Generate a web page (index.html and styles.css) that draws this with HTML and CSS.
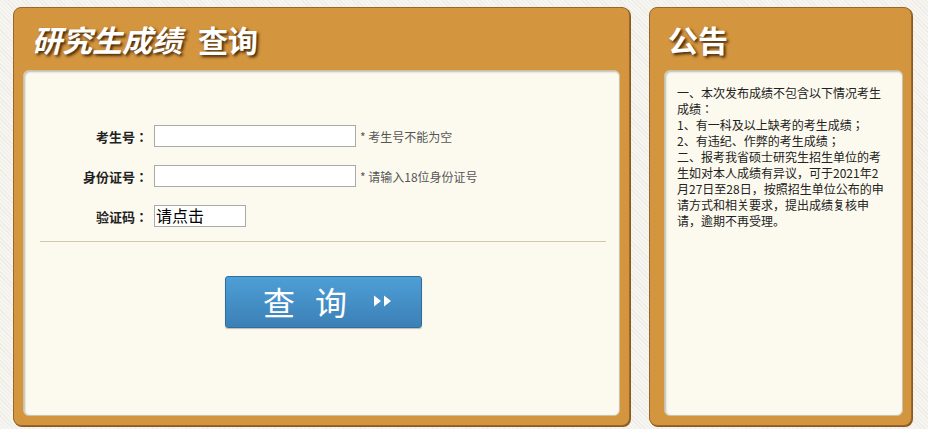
FILE: index.html
```html
<!DOCTYPE html>
<html lang="zh-CN">
<head>
<meta charset="utf-8">
<title>研究生成绩查询</title>
<link rel="stylesheet" href="styles.css">
</head>
<body>
<div class="page">
  <section class="panel panel-main">
    <h1 class="panel-title"><span class="slant">研究生成绩</span><span class="title-gap">查询</span></h1>
    <div class="panel-body form-body">
      <div class="form-grid">
        <label class="f-label" lang="ja">考生号：</label>
        <div class="f-field"><input class="f-input" type="text"><span class="f-hint">* 考生号不能为空</span></div>
        <label class="f-label" lang="ja">身份证号：</label>
        <div class="f-field"><input class="f-input" type="text"><span class="f-hint">* 请输入18位身份证号</span></div>
        <label class="f-label" lang="ja">验证码：</label>
        <div class="f-field"><span class="captcha">请点击</span></div>
      </div>
      <hr class="divider">
      <div class="btn-row">
        <button class="btn-query" type="button"><span class="btn-char">查</span><span class="btn-char btn-char2">询</span><span class="btn-arrows"><svg width="22" height="14" viewBox="0 0 22 14"><path d="M2 1.5 L9 7 L2 12.5 Z M12 1.5 L19 7 L12 12.5 Z" fill="#fff"/></svg></span></button>
      </div>
    </div>
  </section>
  <section class="panel panel-side">
    <h1 class="panel-title">公告</h1>
    <div class="panel-body notice-body">
      <p class="notice" lang="ja">一、本次发布成绩不包含以下情况考生成绩：<br>1、有一科及以上缺考的考生成绩；<br>2、有违纪、作弊的考生成绩；<br>二、报考我省硕士研究生招生单位的考生如对本人成绩有异议，可于2021年2月27日至28日，按照招生单位公布的申请方式和相关要求，提出成绩复核申请，逾期不再受理。</p>
    </div>
  </section>
</div>
</body>
</html>
```

FILE: styles.css
```css
html, body {
  margin: 0;
  padding: 0;
}
body {
  background-color: #f6f5f0;
  background-image: repeating-linear-gradient(45deg, rgba(0,0,0,0.035) 0 1px, transparent 1px 3px);
  font-family: "Noto Sans CJK SC", "Noto Sans", sans-serif;
  width: 928px;
  height: 429px;
  overflow: hidden;
}
.page {
  display: flex;
  gap: 19px;
  padding: 7px 0 0 13px;
}
.panel {
  box-sizing: border-box;
  height: 419px;
  background: #d4953f;
  border: 1px solid #9b6628;
  border-radius: 8px;
  box-shadow: 1px 1px 0 #8a5a22;
  display: flex;
  flex-direction: column;
}
.panel-main { width: 617px; }
.panel-side { width: 263px; }
.panel-title {
  margin: 0;
  height: 62px;
  display: flex;
  align-items: center;
  color: #fff;
  font-size: 30px;
  font-weight: 700;
  letter-spacing: 0;
  text-shadow: 2px 2px 3px rgba(50,25,0,0.9);
}
.panel-main .panel-title { padding-left: 18px; }
.panel-side .panel-title { padding-left: 18px; }
.slant { font-style: italic; }
.title-gap { margin-left: 16px; }
.panel-body {
  flex: 1;
  background: #fcfaee;
  border-radius: 6px;
  border: 1px solid #c9c2aa;
  box-shadow: inset 1px 1px 2px rgba(0,0,0,0.25);
}
.form-body {
  margin: 0 9px 9px 9px;
  padding-top: 54px;
}
.notice-body {
  margin: 0 8px 9px 14px;
  padding: 14px 12px 0 12px;
}
.form-grid {
  display: grid;
  grid-template-columns: 124px auto;
  row-gap: 18px;
  column-gap: 6px;
  align-items: center;
}
.f-label {
  text-align: right;
  font-family: "Noto Sans CJK JP", "Noto Sans CJK SC", sans-serif;
  font-size: 13px;
  font-weight: 700;
  color: #222;
}
.f-field {
  display: flex;
  align-items: center;
  height: 22px;
}
.f-input {
  box-sizing: border-box;
  width: 202px;
  height: 22px;
  border: 1px solid #aaa;
  background: #fff;
  margin: 0;
  padding: 0 3px;
}
.f-hint {
  margin-left: 4px;
  font-size: 12px;
  color: #555;
}
.captcha {
  box-sizing: border-box;
  width: 92px;
  height: 22px;
  border: 1px solid #aaa;
  background: #fff;
  font-family: "Noto Sans CJK SC", sans-serif;
  font-size: 16px;
  line-height: 18px;
  color: #000;
  padding-left: 1px;
}
.divider {
  margin: 14px 13px 0 16px;
  border: 0;
  border-top: 1px solid #d2c9a8;
  height: 0;
}
.btn-row {
  display: flex;
  justify-content: center;
  padding-top: 34px;
  padding-left: 4px;
}
.btn-query {
  box-sizing: border-box;
  width: 197px;
  height: 52px;
  border: 1px solid #2e6d9c;
  border-radius: 3px;
  background: linear-gradient(#4d9fd6, #3b80b6);
  color: #fff;
  font-family: "Noto Sans CJK SC", sans-serif;
  font-size: 32px;
  display: flex;
  align-items: center;
  padding: 0 0 2px 37px;
  box-shadow: 0 1px 1px rgba(0,0,0,0.25);
}
.btn-char {
  line-height: 1;
}
.btn-char2 {
  margin-left: 20px;
}
.btn-arrows {
  display: flex;
  margin-left: 25px;
}
.notice {
  margin: 0;
  font-family: "Noto Sans CJK JP", "Noto Sans CJK SC", sans-serif;
  font-size: 12px;
  line-height: 16px;
  color: #222;
}
```
